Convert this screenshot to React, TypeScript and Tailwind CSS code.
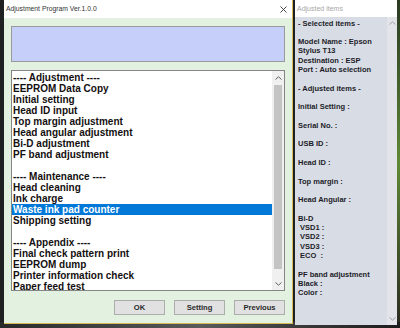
import React from "react";

const listItems: string[] = [
  "---- Adjustment ----",
  "EEPROM Data Copy",
  "Initial setting",
  "Head ID input",
  "Top margin adjustment",
  "Head angular adjustment",
  "Bi-D adjustment",
  "PF band adjustment",
  "",
  "---- Maintenance ----",
  "Head cleaning",
  "Ink charge",
  "Waste ink pad counter",
  "Shipping setting",
  "",
  "---- Appendix ----",
  "Final check pattern print",
  "EEPROM dump",
  "Printer information check",
  "Paper feed test",
];

const rightLines: string[] = [
  "- Selected items -",
  "",
  "Model Name : Epson",
  "Stylus T13",
  "Destination : ESP",
  "Port : Auto selection",
  "",
  "- Adjusted items -",
  "",
  "Initial Setting :",
  "",
  "Serial No. :",
  "",
  "USB ID :",
  "",
  "Head ID :",
  "",
  "Top margin :",
  "",
  "Head Angular :",
  "",
  "Bi-D",
  " VSD1 :",
  " VSD2 :",
  " VSD3 :",
  " ECO  :",
  "",
  "PF band adjustment",
  "Black :",
  "Color :",
];

function ChevronUp({ color = "#606060" }: { color?: string }) {
  return (
    <svg width="7" height="4" viewBox="0 0 7 4">
      <polyline points="0.5,3.5 3.5,0.8 6.5,3.5" fill="none" stroke={color} strokeWidth="1" />
    </svg>
  );
}

function ChevronDown({ color = "#606060" }: { color?: string }) {
  return (
    <svg width="7" height="4" viewBox="0 0 7 4">
      <polyline points="0.5,0.5 3.5,3.2 6.5,0.5" fill="none" stroke={color} strokeWidth="1" />
    </svg>
  );
}

function Button({ label }: { label: string }) {
  return (
    <div className="w-[51px] h-[15px] bg-[#e1e1e1] border border-[#adadad] flex items-center justify-center text-[7.6px] font-bold text-[#2a2a2a]">
      {label}
    </div>
  );
}

export default function App() {
  return (
    <div className="relative w-[400px] h-[328px] overflow-hidden bg-[#1f2021] font-['Liberation_Sans',Arial,sans-serif]">
      {/* desktop strips */}
      <div className="absolute left-[397px] top-0 w-[3px] h-[328px] bg-gradient-to-b from-[#2a3a22] via-[#5f8a34] to-[#2a2a1e]" />
      <div className="absolute left-0 top-[322px] w-[400px] h-[6px] bg-gradient-to-r from-[#2a2a2a] via-[#5a5a5a] to-[#1c1c1c]" />

      {/* main window */}
      <div className="absolute left-[4px] top-0 w-[289px] h-[324px] flex flex-col bg-[#e3f1e1] border-r border-b border-[#d9b957]">
        <div className="h-[18px] bg-white flex items-center justify-between pl-[2px] pr-[5px]">
          <span className="text-[6.8px] text-[#333333] leading-none">Adjustment Program Ver.1.0.0</span>
          <svg width="7" height="7" viewBox="0 0 7 7">
            <line x1="0.5" y1="0.5" x2="6.5" y2="6.5" stroke="#333" strokeWidth="0.9" />
            <line x1="6.5" y1="0.5" x2="0.5" y2="6.5" stroke="#333" strokeWidth="0.9" />
          </svg>
        </div>
        <div className="flex flex-col pl-[7px] pr-[7px] pt-[8px]">
          <div className="h-[36px] bg-[#c6cefa] border border-[#9a9a9a]" />
          <div className="mt-[8px] h-[221px] bg-white border border-[#858585] flex overflow-hidden">
            <div className="flex-1 flex flex-col pt-[1px] overflow-hidden">
              {listItems.map((t, i) => (
                <div
                  key={i}
                  className={
                    "h-[11px] shrink-0 px-[1px] text-[10px] leading-[11px] font-bold whitespace-pre " +
                    (i === 12 ? "bg-[#0078d7] text-white" : "text-[#141010]")
                  }
                >
                  {t}
                </div>
              ))}
            </div>
            <div className="w-[12px] bg-[#f0f0f0] flex flex-col">
              <div className="h-[13px] flex items-center justify-center">
                <ChevronUp />
              </div>
              <div className="mt-[1px] h-[184px] mx-[2px] bg-[#c4c4c4]" />
              <div className="flex-1" />
              <div className="h-[12px] flex items-center justify-center">
                <ChevronDown />
              </div>
            </div>
          </div>
          <div className="mt-[9px] flex justify-end gap-[9px]">
            <Button label="OK" />
            <Button label="Setting" />
            <Button label="Previous" />
          </div>
        </div>
      </div>

      {/* right panel */}
      <div className="absolute left-[295px] top-0 w-[102px] h-[325px] flex flex-col">
        <div className="h-[17px] bg-white flex items-center pl-[2px]">
          <span className="text-[7px] text-[#a8a8a8] leading-none">Adjusted items</span>
        </div>
        <div className="flex-1 flex bg-[#d8dce5]">
          <div className="flex-1 flex flex-col pl-[3px] pt-[1.5px] overflow-hidden">
            {rightLines.map((t, i) => (
              <div
                key={i}
                className="h-[9.3px] shrink-0 text-[7.5px] leading-[9.3px] font-bold text-[#1c1c28] whitespace-pre"
              >
                {t}
              </div>
            ))}
          </div>
          <div className="w-[10px] bg-[#e2e4ea] flex flex-col justify-between py-[4px] items-center">
            <ChevronUp color="#a0a0a8" />
            <ChevronDown color="#a0a0a8" />
          </div>
        </div>
      </div>
    </div>
  );
}
